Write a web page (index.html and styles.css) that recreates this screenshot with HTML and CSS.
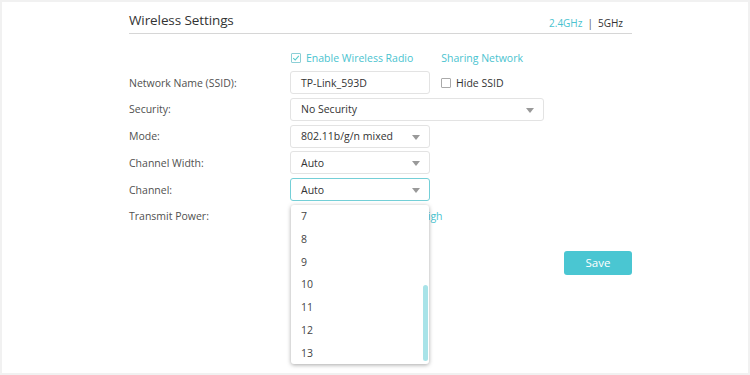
FILE: index.html
```html
<!DOCTYPE html>
<html>
<head>
<meta charset="utf-8">
<link rel="stylesheet" href="styles.css">
</head>
<body>
<div class="frame">
  <div class="panel">
    <div class="head">
      <h1 class="title">Wireless Settings</h1>
      <div class="bands"><span class="band active">2.4GHz</span><span class="sep">|</span><span class="band">5GHz</span></div>
    </div>
    <div class="toprow">
      <label class="check teal"><span class="box checked"><svg width="8" height="8" viewBox="0 0 8 8"><path d="M1.2 4.2 L3.2 6 L6.8 1.8" fill="none" stroke="#5cc" stroke-width="1.1"/></svg></span>Enable Wireless Radio</label>
      <span class="link">Sharing Network</span>
    </div>
    <div class="rows">
      <div class="row">
        <span class="label">Network Name (SSID):</span>
        <div class="field small">TP-Link_593D</div>
        <label class="check hide"><span class="box"></span>Hide SSID</label>
      </div>
      <div class="row">
        <span class="label">Security:</span>
        <div class="field wide select">No Security<span class="arrow"></span></div>
      </div>
      <div class="row">
        <span class="label">Mode:</span>
        <div class="field small select">802.11b/g/n mixed<span class="arrow"></span></div>
      </div>
      <div class="row">
        <span class="label">Channel Width:</span>
        <div class="field small select">Auto<span class="arrow"></span></div>
      </div>
      <div class="row">
        <span class="label">Channel:</span>
        <div class="field small select focus">Auto<span class="arrow"></span>
          <ul class="menu">
            <li>7</li><li>8</li><li>9</li><li>10</li><li>11</li><li>12</li><li>13</li>
            <span class="scroll"></span>
          </ul>
        </div>
      </div>
      <div class="row">
        <span class="label">Transmit Power:</span>
        <div class="power"><span class="pw teal">High</span></div>
      </div>
    </div>
    <div class="actions"><button class="save">Save</button></div>
  </div>
</div>
</body>
</html>
```
FILE: styles.css
```css
* { box-sizing: border-box; }
html, body { margin: 0; padding: 0; background: #fff; }
body { font-family: "Open Sans", "Liberation Sans", sans-serif; color: #505050; font-size: 10.5px; }
.frame { width: 750px; height: 375px; border: 2px solid #f1f1f1; overflow: hidden; }
.panel { width: 503px; margin-left: 127px; }
.head { display: flex; align-items: flex-end; justify-content: space-between; height: 32px; border-bottom: 1px solid #d6d6d6; padding-bottom: 4px; }
.title { margin: 0; font-weight: normal; font-size: 13.5px; color: #333; line-height: 18px; letter-spacing: -0.1px; }
.bands { font-size: 10px; color: #333; display: flex; gap: 5px; padding-right: 9px; line-height: 14px; margin-bottom: -1px; }
.band.active { color: #4ac3cf; }
.sep { color: #555; }
.toprow { display: flex; align-items: center; height: 20px; margin-top: 14px; margin-left: 162px; gap: 28px; }
.teal { color: #4ac3cf; }
.link { color: #4ac3cf; }
.check { display: flex; align-items: center; gap: 5px; }
.box { width: 10px; height: 10px; border: 1px solid #aaa; border-radius: 1px; display: inline-flex; align-items: center; justify-content: center; background: #fff; }
.box.checked { border-color: #8ccfd6; }
.rows { display: flex; flex-direction: column; gap: 3.75px; margin-top: 3px; }
.row { display: flex; align-items: center; height: 23px; position: relative; }
.label { width: 161px; flex: none; }
.field { height: 23px; border: 1px solid #e3e3e3; border-radius: 3px; padding-left: 10px; display: flex; align-items: center; color: #333; position: relative; }
.field.small { width: 140px; }
.field.wide { width: 254px; }
.field.focus { border-color: #74cfd7; }
.arrow { position: absolute; right: 9px; top: 9px; width: 0; height: 0; border-left: 4px solid transparent; border-right: 4px solid transparent; border-top: 5px solid #999; }
.hide { margin-left: 11px; color: #333; }
.power { display: flex; padding-left: 130px; }
.pw { width: 45px; }
.menu { position: absolute; left: 0; top: 26px; width: 138px; height: 159px; margin: 0; padding: 0; list-style: none; background: #fff; border-radius: 3px; box-shadow: 0 1px 4px rgba(0,0,0,0.35); z-index: 2; }
.menu li { height: 22.8px; line-height: 22.8px; padding-left: 10px; color: #444; }
.scroll { position: absolute; right: 1px; top: 80px; width: 5px; height: 76px; background: #a8e3e8; border-radius: 3px; }
.actions { display: flex; justify-content: flex-end; margin-top: 23px; }
.save { width: 68px; height: 24px; border: none; border-radius: 3px; background: #4ac6d2; color: #fff; font-family: inherit; font-size: 11.5px; padding: 0; }
```
